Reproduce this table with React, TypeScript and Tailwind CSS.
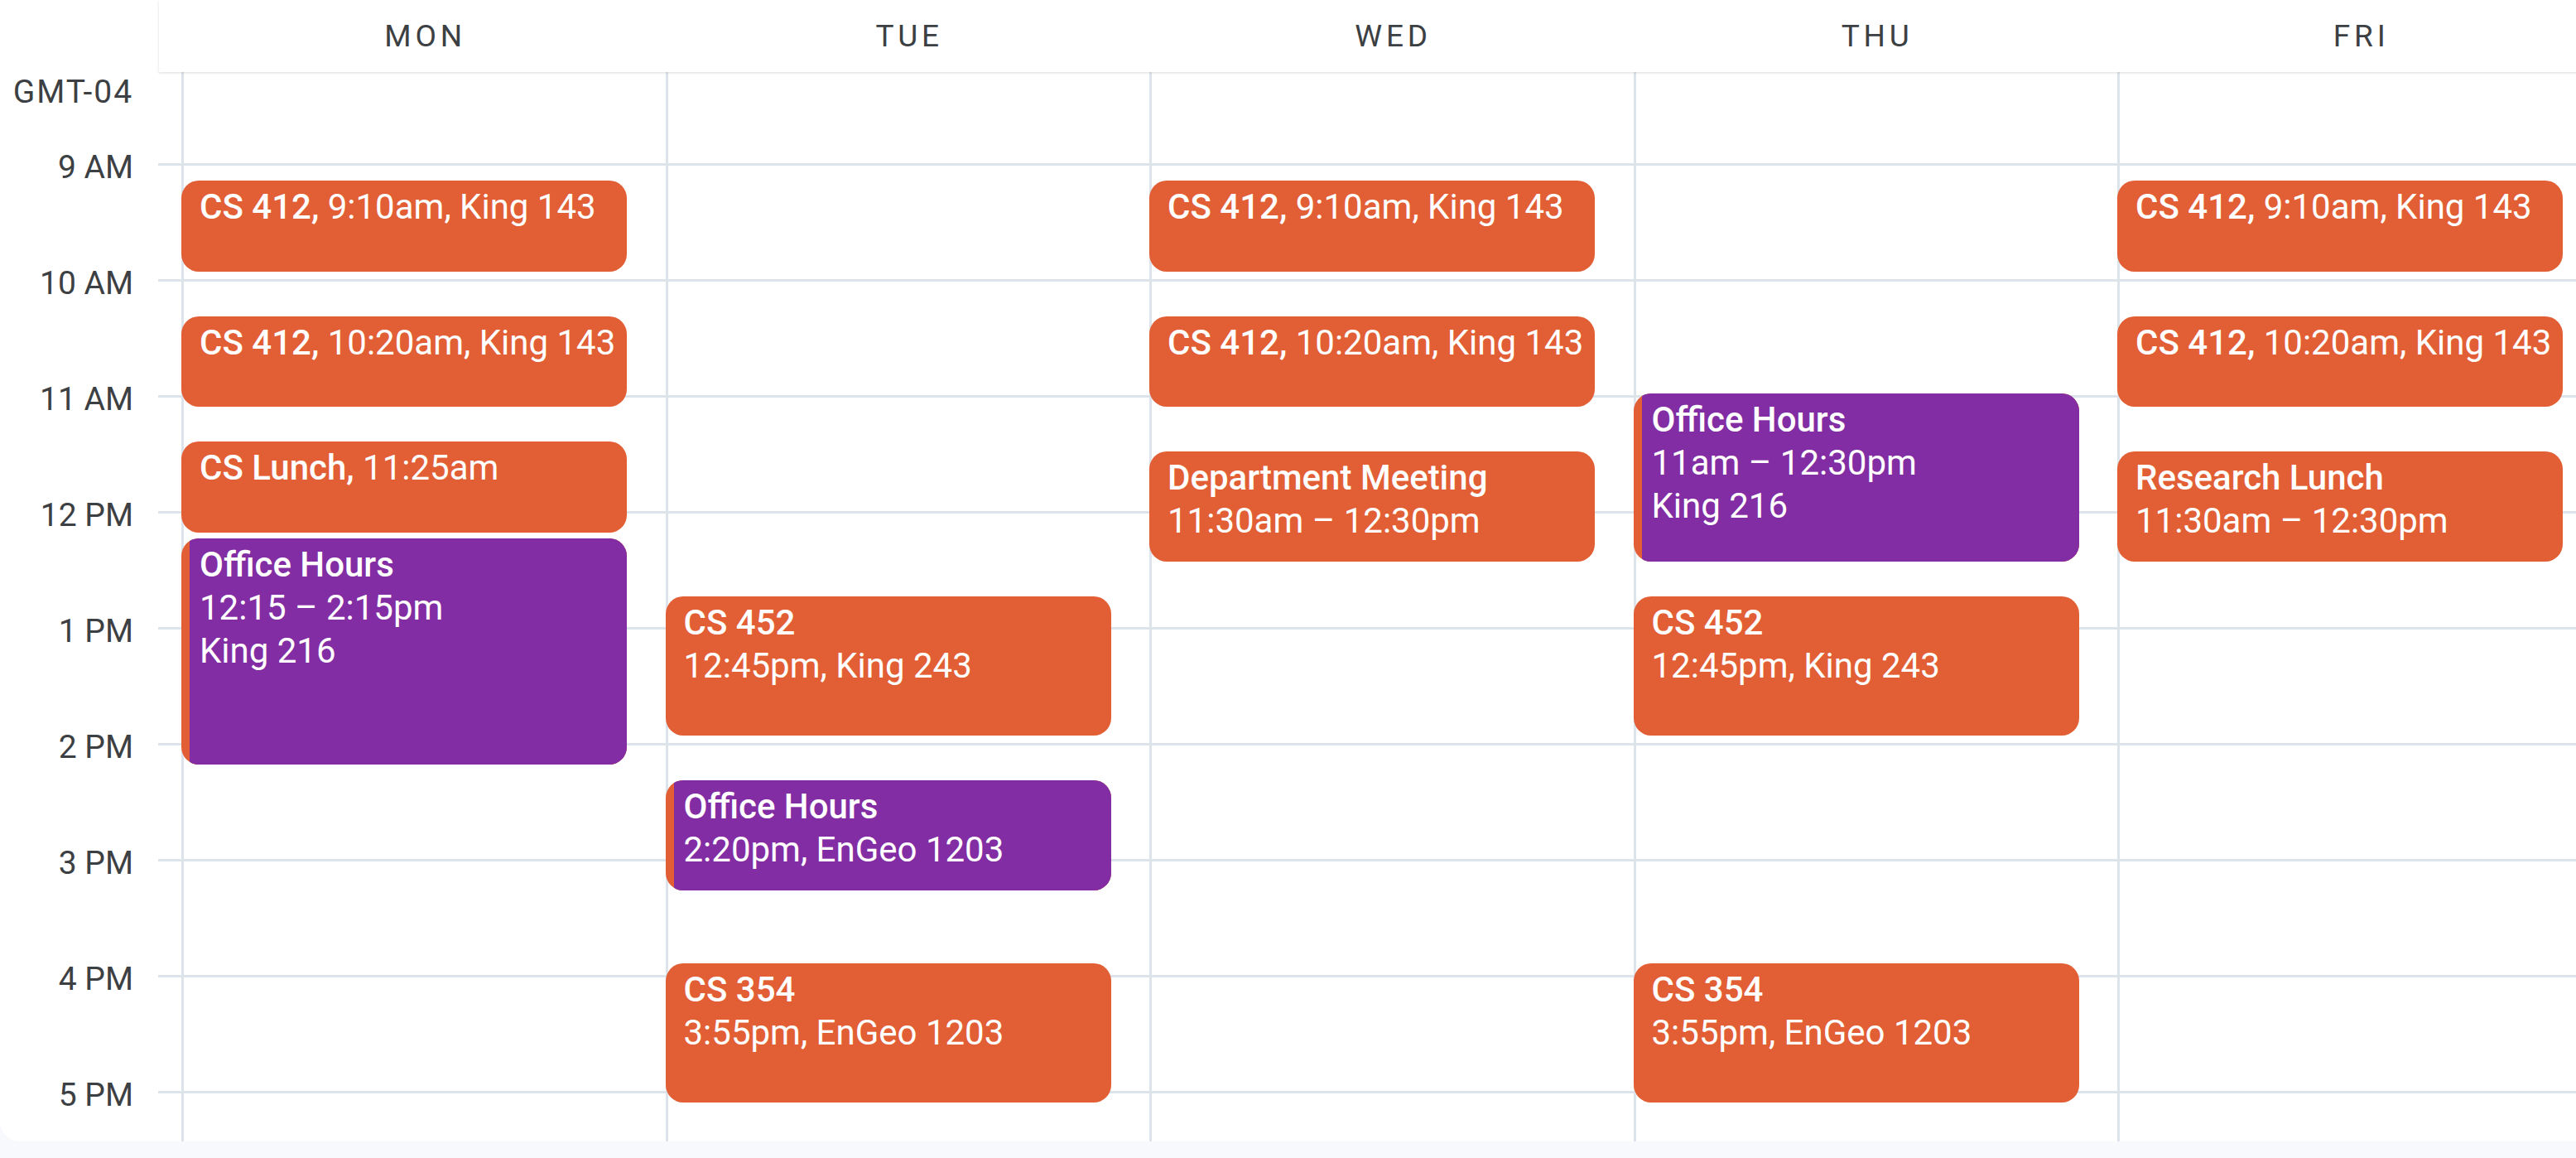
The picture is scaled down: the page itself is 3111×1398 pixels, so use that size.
import React from "react";

type CalEvent = {
  start: number; // minutes after 9:00
  end: number;
  title: string;
  rest?: string; // same line as the title
  lines?: string[]; // lines under the title
  purple?: boolean;
};

const DAYS = ["MON", "TUE", "WED", "THU", "FRI"];
const HOURS = ["9 AM", "10 AM", "11 AM", "12 PM", "1 PM", "2 PM", "3 PM", "4 PM", "5 PM"];

const cs412a: CalEvent = { start: 10, end: 60, title: "CS 412,", rest: " 9:10am, King 143" };
const cs412b: CalEvent = { start: 80, end: 130, title: "CS 412,", rest: " 10:20am, King 143" };
const cs452: CalEvent = { start: 225, end: 300, title: "CS 452", lines: ["12:45pm, King 243"] };
const cs354: CalEvent = { start: 415, end: 490, title: "CS 354", lines: ["3:55pm, EnGeo 1203"] };

const EVENTS: CalEvent[][] = [
  [
    cs412a,
    cs412b,
    { start: 145, end: 195, title: "CS Lunch,", rest: " 11:25am" },
    { start: 195, end: 315, title: "Office Hours", lines: ["12:15 – 2:15pm", "King 216"], purple: true },
  ],
  [
    cs452,
    { start: 320, end: 380, title: "Office Hours", lines: ["2:20pm, EnGeo 1203"], purple: true },
    cs354,
  ],
  [cs412a, cs412b, { start: 150, end: 210, title: "Department Meeting", lines: ["11:30am – 12:30pm"] }],
  [
    { start: 120, end: 210, title: "Office Hours", lines: ["11am – 12:30pm", "King 216"], purple: true },
    cs452,
    cs354,
  ],
  [cs412a, cs412b, { start: 150, end: 210, title: "Research Lunch", lines: ["11:30am – 12:30pm"] }],
];

function EventText({ ev }: { ev: CalEvent }) {
  return (
    <div className="text-[42px] leading-[52px] text-white whitespace-nowrap">
      <div>
        <span className="font-medium">{ev.title}</span>
        {ev.rest}
      </div>
      {ev.lines?.map((l) => (
        <div key={l}>{l}</div>
      ))}
    </div>
  );
}

function EventCard({ ev }: { ev: CalEvent }) {
  const style = { top: 108 + (ev.start * 7) / 3, height: ((ev.end - ev.start) * 7) / 3 - 7 };
  if (ev.purple) {
    return (
      <div className="absolute -left-[3px] w-[538px] rounded-[21px] overflow-hidden bg-[#e25e35]" style={style}>
        <div className="ml-[10px] h-full bg-[#822da3] pl-[12px] pt-[6px]">
          <EventText ev={ev} />
        </div>
      </div>
    );
  }
  return (
    <div className="absolute -left-[3px] w-[538px] rounded-[21px] bg-[#e25e35] pl-[22px] pt-[6px] overflow-hidden" style={style}>
      <EventText ev={ev} />
    </div>
  );
}

export default function App() {
  return (
    <div className="w-[3111px] h-[1398px] overflow-hidden bg-[#f8f9fc] font-['Roboto',sans-serif]">
      <div className="w-[3142px] h-[1378px] bg-white rounded-bl-[24px] overflow-hidden flex flex-col">
        {/* Day header */}
        <div className="h-[87px] flex shrink-0">
          <div className="w-[192px] shrink-0" />
          <div className="flex-1 flex pl-[27px] bg-white relative z-10 shadow-[0_1px_3px_rgba(60,64,67,0.18)]">
            {DAYS.map((d) => (
              <div key={d} className="w-[584.5px] shrink-0 flex items-center justify-center">
                <span className="text-[37px] leading-none tracking-[0.13em] text-[#3c4043] pl-[0.13em]">{d}</span>
              </div>
            ))}
          </div>
        </div>

        {/* Body */}
        <div className="flex-1 flex overflow-hidden">
          {/* Time gutter */}
          <div className="w-[219px] shrink-0 flex flex-col">
            <div className="h-[110px] shrink-0 pt-[5px]">
              <div className="w-[161px] text-right text-[39px] leading-none text-[#3c4043] tracking-[0.05em]">GMT-04</div>
            </div>
            {HOURS.map((h) => (
              <div key={h} className="h-[140px] shrink-0 flex items-start">
                <div className="w-[161px] -mt-[14px] text-right text-[39px] leading-none text-[#3c4043]">{h}</div>
                <div className="w-[30px]" />
                <div className="w-[28px] border-t-[3px] border-[#dde3ea]" />
              </div>
            ))}
          </div>

          {/* Day columns */}
          {EVENTS.map((evs, i) => (
            <div key={i} className="w-[584.5px] shrink-0 relative flex flex-col border-l-[3px] border-[#dde3ea]">
              <div className="h-[110px] shrink-0" />
              {HOURS.map((h) => (
                <div key={h} className="h-[140px] shrink-0 border-t-[3px] border-[#dde3ea]" />
              ))}
              {evs.map((ev, j) => (
                <EventCard key={j} ev={ev} />
              ))}
            </div>
          ))}
        </div>
      </div>
    </div>
  );
}
